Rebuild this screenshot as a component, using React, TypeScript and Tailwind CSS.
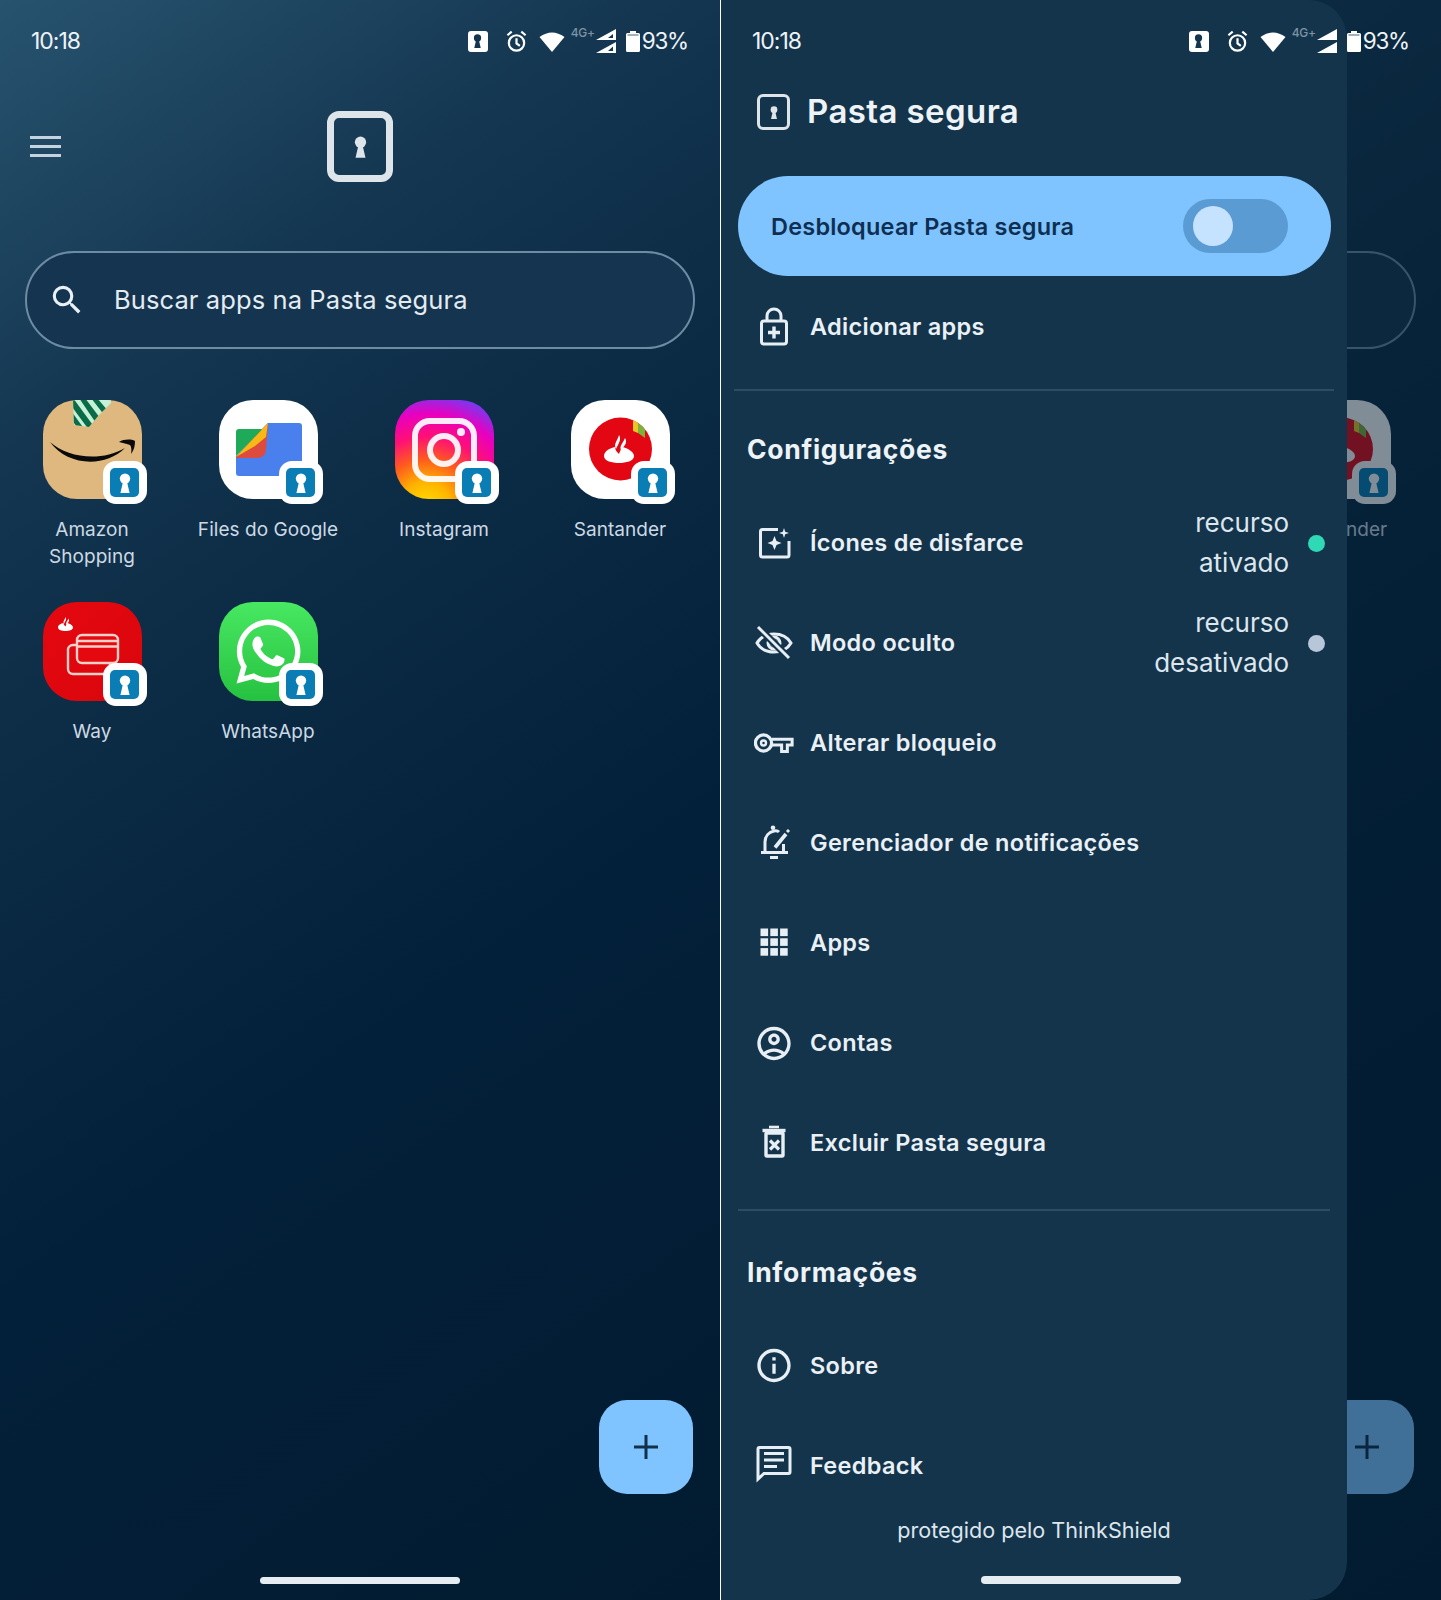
import React from "react";
import { FaWhatsapp } from "react-icons/fa";
import { MdSearch, MdOutlineAccountCircle, MdInfoOutline } from "react-icons/md";

const Keyhole = ({ className, fill = "currentColor" }: { className?: string; fill?: string }) => (
  <svg viewBox="0 0 12 20" className={className}>
    <circle cx="6" cy="5.6" r="5.2" fill={fill} />
    <path d="M4.2 8 L1.4 20 H10.6 L7.8 8 Z" fill={fill} />
  </svg>
);

const Badge = () => (
  <div className="absolute right-[-5px] bottom-[-5px] w-[44px] h-[43px] bg-white rounded-[13px] flex items-center justify-center">
    <div className="w-[29px] h-[29px] bg-[#0a7db5] rounded-[5px] flex items-center justify-center">
      <Keyhole className="w-[12px] h-[20px] text-white" />
    </div>
  </div>
);

const Amazon = () => (
  <svg viewBox="0 0 99 99" className="w-full h-full">
    <defs>
      <clipPath id="tape"><path d="M30 0 L31 25 L46 27 L56 15 L68 3 L68 0 Z" /></clipPath>
    </defs>
    <rect width="99" height="99" fill="#dfb87f" />
    <g clipPath="url(#tape)">
      <rect width="99" height="30" fill="#c4f1d8" />
      <path d="M26 8 L42 30 L36 30 L26 16 Z M30 -2 L52 28 L46 30 L24 0 Z M42 -2 L60 22 L55 26 L36 -2 Z M54 -2 L66 12 L62 16 L48 -2 Z" fill="#0b6b48" />
    </g>
    <path d="M7 42 C25 58 58 62 82 48 C62 68 24 66 7 42 Z" fill="#0a0a0a" />
    <path d="M76 42 C81 39 88 39 92 41 C92 46 91 50 88 54 C89 49 88 46 87 45 C84 44 80 43 76 42 Z" fill="#0a0a0a" />
  </svg>
);

const Files = () => (
  <svg viewBox="0 0 99 99" className="w-full h-full">
    <rect width="99" height="99" fill="#fff" />
    <path d="M49 23 H80 Q83 23 83 26 V73 Q83 76 80 76 H20 Q17 76 17 73 V56 Z" fill="#4a80ee" />
    <path d="M17 32 Q17 29 20 29 H44 L17 56 Z" fill="#1faa59" />
    <path d="M17 57 L49 23 L47 50 Q46 58 38 58 H17 Z" fill="#dc4b3e" />
    <path d="M17 57 L49 23 L47 37 L36 46 Z" fill="#f9b914" />
  </svg>
);

const Instagram = () => (
  <svg viewBox="0 0 99 99" className="w-full h-full">
    <defs>
      <radialGradient id="ig" cx="32%" cy="108%" r="115%">
        <stop offset="0" stopColor="#ffe000" />
        <stop offset="0.22" stopColor="#ffb400" />
        <stop offset="0.42" stopColor="#ff5a1e" />
        <stop offset="0.62" stopColor="#ff0f76" />
        <stop offset="0.82" stopColor="#e800c0" />
        <stop offset="1" stopColor="#7a38f0" />
      </radialGradient>
    </defs>
    <rect width="99" height="99" fill="url(#ig)" />
    <rect x="20" y="21" width="59" height="58" rx="15" fill="none" stroke="#fff" strokeOpacity="0.92" strokeWidth="6" />
    <circle cx="49" cy="50" r="14" fill="none" stroke="#fff" strokeOpacity="0.92" strokeWidth="6" />
    <circle cx="66" cy="32" r="4" fill="#fff" fillOpacity="0.92" />
  </svg>
);

const Flame = () => (
  <g>
    <path d="M0 21 C0 16 6 13 11 12 C11 15 13 17 15 19 C16 16 17 14 18 12 C24 13 30 17 30 21 C30 26 22 28 15 28 C8 28 0 26 0 21 Z" fill="#fff" />
    <path d="M12 14 C9 9 14 5 15 0 C18 5 14 9 12 14 Z" fill="#fff" />
    <path d="M17 15 C15 11 19 8 21 3 C24 8 20 11 17 15 Z" fill="#fff" />
  </g>
);

const Santander = () => (
  <svg viewBox="0 0 99 99" className="w-full h-full">
    <defs>
      <clipPath id="sc"><circle cx="49.5" cy="49" r="31.5" /></clipPath>
    </defs>
    <rect width="99" height="99" fill="#fff" />
    <circle cx="49.5" cy="49" r="31.5" fill="#e30613" />
    <g clipPath="url(#sc)">
      <path d="M62 15 H67 V33 L62 31 Z" fill="#e8c624" />
      <path d="M67 15 H74 V38 L67 33 Z" fill="#7ab23a" />
    </g>
    <g transform="translate(33 35)"><Flame /></g>
  </svg>
);

const Way = () => (
  <svg viewBox="0 0 99 99" className="w-full h-full">
    <defs>
      <linearGradient id="wy" x1="0" y1="0" x2="1" y2="1">
        <stop offset="0" stopColor="#e5080f" />
        <stop offset="1" stopColor="#d9060c" />
      </linearGradient>
    </defs>
    <rect width="99" height="99" fill="url(#wy)" />
    <g transform="translate(15 15) scale(0.5)"><Flame /></g>
    <rect x="25" y="43" width="42" height="29" rx="5" fill="none" stroke="#f8cfc9" strokeWidth="2.4" />
    <rect x="34" y="33" width="41" height="28" rx="5" fill="#e5080f" stroke="#f8cfc9" strokeWidth="2.4" />
    <path d="M34 39 H75 M34 44.5 H75" stroke="#f8cfc9" strokeWidth="2.4" />
  </svg>
);

const WhatsApp = () => (
  <div className="w-full h-full bg-gradient-to-b from-[#48e862] to-[#25c140] flex items-center justify-center text-white">
    <FaWhatsapp size={73} />
  </div>
);

const apps: [string, React.ReactNode][] = [
  ["Amazon\nShopping", <Amazon />],
  ["Files do Google", <Files />],
  ["Instagram", <Instagram />],
  ["Santander", <Santander />],
  ["Way", <Way />],
  ["WhatsApp", <WhatsApp />],
];

const Status = ({ solid = false }: { solid?: boolean }) => (
  <div className="h-[82px] pl-[31px] pr-[32px] flex items-center justify-between text-white">
    <span className="text-[23px] tracking-[-1px] text-[#eef3f7]">10:18</span>
    <div className="flex items-center h-[26px]">
      <div className="w-[20px] h-[21px] bg-white rounded-[3px] flex items-center justify-center">
        <Keyhole className="w-[9px] h-[14px] text-[#143550]" />
      </div>
      <svg viewBox="0 0 24 24" className="ml-[17px] w-[23px] h-[23px]" fill="none" stroke="#fff" strokeWidth="2.3">
        <circle cx="12" cy="13.5" r="8" />
        <path d="M12 8.5 V14 L15.5 16.5" />
        <path d="M2.5 5.5 L7 1.8 M21.5 5.5 L17 1.8" />
      </svg>
      <svg viewBox="0 0 26 21" className="ml-[11px] w-[26px] h-[21px]" fill="#fff">
        <path d="M0.5 6 Q13 -3 25.5 6 L13 21 Z" />
      </svg>
      <div className="relative w-[45px] h-[24px] ml-[6px]">
        <span className="absolute left-0 top-[-3px] text-[12px] leading-[14px] font-medium tracking-[-0.2px] text-[#7d93a5]">4G+</span>
        <svg viewBox="0 0 20 24" className="absolute right-[0px] top-0 w-[20px] h-[24px]" fill="#fff">
          <path d="M20 0 V11 H0 Z" />
          <path d="M20 13 V24 H0 Z" />
          {!solid && <path d="M17 5 V9 H12 Z M17 17.5 V22 H12 Z" fill="#153650" />}
        </svg>
      </div>
      <svg viewBox="0 0 14 21" className="ml-[10px] w-[14px] h-[21px]" fill="#fff">
        <path d="M4 0 H10 V2 H12.5 Q14 2 14 3.5 V19.5 Q14 21 12.5 21 H1.5 Q0 21 0 19.5 V3.5 Q0 2 1.5 2 H4 Z" />
        <rect x="1.5" y="3.2" width="11" height="1.6" fill="#8ba0b0" />
      </svg>
      <span className="ml-[2px] text-[22.5px] tracking-[-1.2px] text-[#eef3f7]">93%</span>
    </div>
  </div>
);

const Home = ({ first = true }: { first?: boolean }) => (
  <div className="absolute inset-0 flex flex-col">
    {first ? <Status /> : <div className="h-[82px] shrink-0" />}
    <div className="relative h-[169px] shrink-0 flex justify-center pt-[29px]">
      <div className="absolute left-[30px] top-[54px] w-[31px] flex flex-col gap-[6px]">
        <div className="h-[3px] bg-[#c4d3de]" />
        <div className="h-[3px] bg-[#c4d3de]" />
        <div className="h-[3px] bg-[#c4d3de]" />
      </div>
      <div className="w-[66px] h-[71px] rounded-[12px] border-[7px] border-[#dde4ea] flex items-center justify-center">
        <Keyhole className="w-[13px] h-[22px] text-[#dde4ea]" />
      </div>
    </div>
    <div className="mx-[25px] w-[670px] h-[98px] shrink-0 rounded-full border-2 border-[#6d8ca3] bg-[#14344f] flex items-center pl-[21px]">
      <MdSearch className="text-[#eaf1f6] w-[38px] h-[38px]" />
      {first && <span className="ml-[28px] text-[25.5px] tracking-[0.1px] text-[#e4ecf2]">Buscar apps na Pasta segura</span>}
    </div>
    <div className="mt-[51px] pl-[4px] grid grid-cols-[repeat(4,176px)] auto-rows-[202px]">
      {apps.map(([name, icon]) => (
        <div key={name} className="flex flex-col items-center">
          <div className="relative w-[99px] h-[99px]">
            <div className="w-full h-full rounded-[34px] overflow-hidden">{icon}</div>
            <Badge />
          </div>
          {(first || name === "Santander") && (
            <div className="mt-[17px] text-center whitespace-pre-line text-[19px] leading-[27px] tracking-[0.05px] text-[#ccd9e3]">{name}</div>
          )}
        </div>
      ))}
    </div>
    <div className="absolute left-[599px] top-[1400px] w-[94px] h-[94px] rounded-[28px] bg-[#7fc4ff] flex items-center justify-center">
      <svg viewBox="0 0 26 26" className="w-[26px] h-[26px]" stroke="#10304c" strokeWidth="3"><path d="M13 1 V25 M1 13 H25" /></svg>
    </div>
    {first && <div className="absolute left-[260px] top-[1577px] w-[200px] h-[7px] rounded-full bg-[#e5edf3]" />}
  </div>
);

const ic = "w-[40px] h-[40px]";
const S = { fill: "none", stroke: "#e8eff4", strokeWidth: 3 };

const LockPlus = () => (
  <svg viewBox="0 0 40 40" className={ic} {...S}>
    <rect x="7.5" y="15" width="25" height="23" rx="2.5" />
    <path d="M13 15 V10 A7 7 0 0 1 27 10 V15" />
    <path d="M20 20.5 V32.5 M14 26.5 H26" strokeWidth="3.4" />
  </svg>
);
const Sparkle = () => (
  <svg viewBox="0 0 40 40" className={ic} {...S}>
    <path d="M24 6.5 H8.5 Q6.5 6.5 6.5 8.5 V32 Q6.5 34 8.5 34 H33 Q35 34 35 32 V18" />
    <path d="M20.5 13 L22.5 18 L27.5 20 L22.5 22 L20.5 27 L18.5 22 L13.5 20 L18.5 18 Z" fill="#e8eff4" stroke="none" />
    <path d="M30 5 L31.2 8.8 L35 10 L31.2 11.2 L30 15 L28.8 11.2 L25 10 L28.8 8.8 Z" fill="#e8eff4" stroke="none" />
  </svg>
);
const EyeOff = () => (
  <svg viewBox="0 0 40 40" className={ic} {...S}>
    <path d="M3 20 C10 8 30 8 37 20 C30 32 10 32 3 20 Z" />
    <circle cx="20" cy="20" r="6" fill="#e8eff4" fillOpacity="0.35" />
    <path d="M4 4 L35 35" strokeWidth="7" stroke="#14344c" />
    <path d="M4 4 L35 35" strokeWidth="3" />
  </svg>
);
const Key = () => (
  <svg viewBox="0 0 42 40" className="w-[42px] h-[40px]" {...S}>
    <circle cx="10" cy="20" r="8.5" strokeWidth="3.4" />
    <circle cx="10" cy="20" r="2.6" strokeWidth="2.6" />
    <path d="M18.5 16 H40 V22 H35 V29 H29 V22 H18.5" strokeWidth="3.2" />
  </svg>
);
const BellEdit = () => (
  <svg viewBox="0 0 40 40" className={ic} {...S}>
    <path d="M7 29.5 H34" />
    <path d="M11 29 V19 C11 13 15 9 20 8 C22 7.6 24 8 25 9" />
    <path d="M29.5 21 V29" />
    <circle cx="19" cy="4.8" r="2.3" fill="#e8eff4" stroke="none" />
    <path d="M21 24.5 L32 11" strokeWidth="3.6" />
    <path d="M33 9 L35 7" strokeWidth="3" />
    <path d="M16 34.5 H24" />
  </svg>
);
const Grid9 = () => (
  <svg viewBox="0 0 40 40" className={ic} fill="#e8eff4">
    {[5.5, 15.3, 25.1].flatMap((y) =>
      [6.5, 16.3, 26.1].map((x) => <rect key={x + "-" + y} x={x} y={y} width="7.6" height="7.6" />)
    )}
  </svg>
);
const Trash = () => (
  <svg viewBox="0 0 40 40" className={ic} {...S}>
    <path d="M8.5 7.5 H31.5" strokeWidth="3.4" />
    <path d="M15 4 H25" strokeWidth="2.6" />
    <rect x="12" y="10" width="17" height="23" rx="1" strokeWidth="3.4" />
    <path d="M16 17.5 L25 26.5 M25 17.5 L16 26.5" strokeWidth="3.2" />
  </svg>
);
const Chat = () => (
  <svg viewBox="0 0 40 40" className={ic} {...S}>
    <path d="M4 34 V4 Q4 2.5 5.5 2.5 H34.5 Q36 2.5 36 4 V27 Q36 28.5 34.5 28.5 H10 Z" />
    <path d="M10 8.5 H30 M10 15 H30 M10 21.5 H23" strokeWidth="3.2" />
  </svg>
);

const Row = ({ icon, label, status, dot, low }: { icon: React.ReactNode; label: string; status?: string; dot?: string; low?: boolean }) => (
  <div className="h-[100px] flex items-center pl-[33px]">
    <div className="w-[40px] flex justify-center">{icon}</div>
    <span className={`ml-[16px] text-[23.5px] font-semibold tracking-[0.3px] text-[#eaf1f6] ${low ? "pt-[2px]" : ""}`}>{label}</span>
    {status && (
      <>
        <span className="ml-auto whitespace-pre-line text-right text-[26px] leading-[40px] text-[#dde6ed]">{status}</span>
        <div className={`ml-[19px] mr-[22px] w-[17px] h-[17px] rounded-full ${dot}`} />
      </>
    )}
  </div>
);

const Heading = ({ children, className }: { children: string; className: string }) => (
  <div className={`pl-[26px] text-[26.5px] leading-[34px] font-bold tracking-[0.7px] text-[#eef3f7] ${className}`}>{children}</div>
);

const Drawer = () => (
  <div className="absolute left-0 top-0 bottom-0 w-[626px] rounded-r-[38px] bg-[#14344c] flex flex-col overflow-hidden">
    <div className="h-[82px] shrink-0" />
    <div className="h-[60px] flex items-center pl-[36px]">
      <div className="w-[33px] h-[36px] rounded-[6px] border-[3.5px] border-[#dde4ea] flex items-center justify-center">
        <Keyhole className="w-[8px] h-[13px] text-[#dde4ea]" />
      </div>
      <span className="ml-[17px] text-[33px] font-semibold tracking-[0.4px] text-[#eef3f7]">Pasta segura</span>
    </div>
    <div className="mt-[34px] ml-[17px] w-[593px] h-[100px] rounded-full bg-[#7fc4ff] flex items-center pl-[33px] pr-[43px]">
      <span className="pt-[2px] text-[23.5px] font-semibold tracking-[0.2px] text-[#0f2f52]">Desbloquear Pasta segura</span>
      <div className="ml-auto w-[105px] h-[54px] rounded-full bg-[#5a9bd3] flex items-center pl-[10px]">
        <div className="w-[40px] h-[40px] rounded-full bg-[#c5e2ff]" />
      </div>
    </div>
    <Row icon={<LockPlus />} label="Adicionar apps" low />
    <div className="mt-[13px] ml-[13px] w-[600px] h-[2px] bg-[#2b4d66]" />
    <Heading className="mt-[41px] mb-[27px]">Configurações</Heading>
    <Row icon={<Sparkle />} label="Ícones de disfarce" status={"recurso\nativado"} dot="bg-[#2fd9b5]" />
    <Row icon={<EyeOff />} label="Modo oculto" status={"recurso\ndesativado"} dot="bg-[#b8c6da]" />
    <Row icon={<Key />} label="Alterar bloqueio" />
    <Row icon={<BellEdit />} label="Gerenciador de notificações" />
    <Row icon={<Grid9 />} label="Apps" />
    <Row icon={<MdOutlineAccountCircle className="w-[41px] h-[41px] text-[#e8eff4]" />} label="Contas" />
    <Row icon={<Trash />} label="Excluir Pasta segura" />
    <div className="mt-[16px] ml-[17px] w-[592px] h-[2px] bg-[#2b4d66]" />
    <Heading className="mt-[44px] mb-[26px]">Informações</Heading>
    <Row icon={<MdInfoOutline className="w-[41px] h-[41px] text-[#e8eff4]" />} label="Sobre" low />
    <Row icon={<Chat />} label="Feedback" low />
    <div className="text-center text-[21.6px] leading-[30px] text-[#dde6ed]">protegido pelo ThinkShield</div>
  </div>
);

const bg = "bg-[linear-gradient(145deg,#27536f_0%,#143650_22%,#0b2a44_40%,#03203a_62%,#021b30_100%)]";

export default function App() {
  return (
    <div className="relative w-[1441px] h-[1600px] flex overflow-hidden bg-white font-[Inter,sans-serif]">
      <div className={`relative w-[720px] h-full shrink-0 overflow-hidden ${bg}`}>
        <Home />
      </div>
      <div className={`relative ml-[1px] w-[720px] h-full shrink-0 overflow-hidden ${bg}`}>
        <Home first={false} />
        <div className="absolute inset-0 bg-[#021b30]/50" />
        <Drawer />
        <div className="absolute inset-x-0 top-0"><Status solid /></div>
        <div className="absolute left-[260px] top-[1576px] w-[200px] h-[8px] rounded-full bg-[#e5edf3]" />
      </div>
    </div>
  );
}
